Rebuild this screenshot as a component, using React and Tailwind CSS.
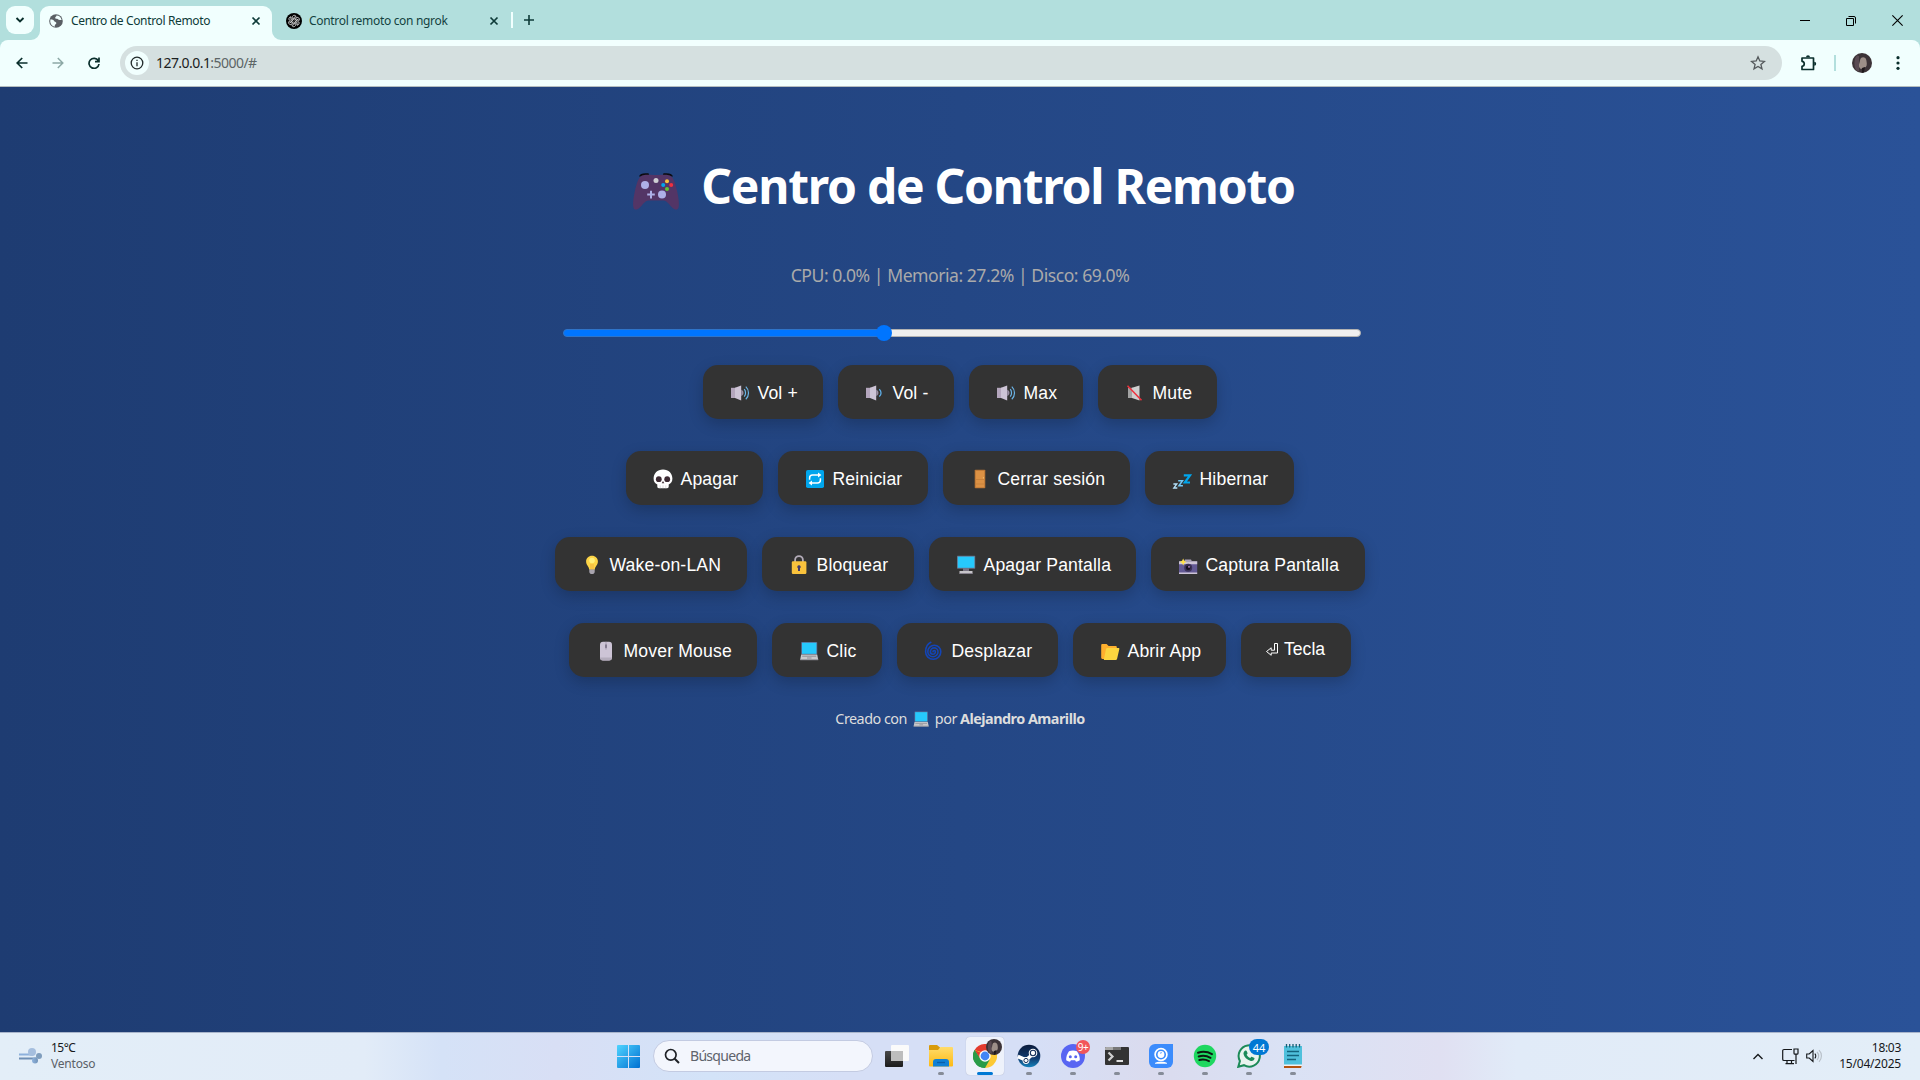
import React from "react";

const UI = "font-['Noto_Sans','Open_Sans',sans-serif]";

/* ---------- Emoji style icons, drawn on a 24x24 grid ---------- */

const Icon = ({ children, className = "w-6 h-6" }) => (
  <svg viewBox="0 0 24 24" className={`${className} shrink-0`} aria-hidden="true">{children}</svg>
);

const SpeakerBody = () => (
  <>
    <path d="M3 6.800h5V17H3z" fill="#b4a6bd" />
    <path d="M7 6.800 13.200 4.400v15L7 17z" fill="#cdc4d6" />
    <path d="M13.200 8.800c3 .6 3 5.600 0 6.200z" fill="#998ea4" />
  </>
);
const SpeakerLoud = () => (
  <Icon>
    <SpeakerBody />
    <path d="M16.200 8.200c1.800 2 1.800 5.400 0 7.400M17.800 5.600c3.600 3.400 3.600 9.200 0 12.600" fill="none" stroke="#6cb5e8" strokeWidth="1.200" />
  </Icon>
);
const SpeakerLow = () => (
  <Icon>
    <SpeakerBody />
    <path d="M16.300 8.200c2.300 2 2.300 5.400 0 7.400" fill="none" stroke="#5fb0ea" strokeWidth="1.300" />
  </Icon>
);
const SpeakerMute = () => (
  <Icon>
    <path d="M5 6.800h5V17H5z" fill="#a2a2a2" />
    <path d="M9 6.800 16.500 4.500v15L9 17z" fill="#cfcfcf" />
    <path d="M4.500 4.800 18.500 19.200" stroke="#f0303c" strokeWidth="1.500" />
  </Icon>
);
const Skull = () => (
  <Icon>
    <path d="M12 2.500c5.700 0 9.400 3.900 9.400 9 0 3.200-1.400 5-3.700 5.900v2.200c0 1-.7 1.700-1.600 1.700H7.900c-.9 0-1.600-.7-1.600-1.700v-2.200c-2.300-.9-3.700-2.700-3.700-5.900 0-5.100 3.700-9 9.400-9z" fill="#fff" />
    <circle cx="7.800" cy="12.200" r="2.900" fill="#3d2a33" />
    <circle cx="16.200" cy="12.200" r="2.900" fill="#3d2a33" />
    <path d="m12 14 1.300 2.300h-2.600z" fill="#3d2a33" />
    <path d="M9.200 18.300v3M12 18.300v3M14.800 18.300v3" stroke="#c9c4c8" strokeWidth=".6" />
  </Icon>
);
const Repeat = () => (
  <Icon>
    <rect x="3" y="3" width="18" height="18" rx="1.800" fill="#00a6ed" />
    <path d="M6.600 12.800V11c0-1.800 1.300-3 3-3h6.600M17.400 11.200V13c0 1.800-1.300 3-3 3H7.800" fill="none" stroke="#fff" strokeWidth="1.500" />
    <path d="m15 5.400 3.400 2.600L15 10.600zM9 13.400 5.600 16 9 18.600z" fill="#fff" />
  </Icon>
);
const Door = () => (
  <Icon>
    <rect x="6.700" y="2.800" width="10.600" height="18.400" rx=".8" fill="#b97434" />
    <rect x="7.700" y="3.800" width="8.600" height="16.600" fill="#dc9144" />
    <path d="M8 12.500h8M8 17h8" stroke="#b97434" strokeWidth=".5" />
    <circle cx="15.400" cy="10.800" r=".6" fill="#ffce7c" />
  </Icon>
);
const Zzz = () => (
  <Icon>
    <path d="M13.800 8.300h6.200L14.800 15.500h5.200" fill="none" stroke="#00a6ed" strokeWidth="2.200" />
    <path d="M8.200 13.700h4.300l-3.600 5h4" fill="none" stroke="#74c8f4" strokeWidth="1.500" />
    <path d="M3.400 17h3.400l-3 4h3.500" fill="none" stroke="#b5e2fb" strokeWidth="1.300" />
  </Icon>
);
const Bulb = () => (
  <Icon>
    <path d="M12 2.800c3.400 0 5.900 2.500 5.900 5.800 0 3.600-2.600 4.500-3.200 8.200H9.300c-.6-3.700-3.200-4.600-3.200-8.200 0-3.300 2.500-5.800 5.900-5.800z" fill="#fdd547" />
    <circle cx="12" cy="7.500" r="2.800" fill="#fff07a" />
    <path d="M11 11v5.500M13 11v5.500" stroke="#e9a33c" strokeWidth=".7" />
    <path d="M9.300 16.600h5.400v2.200c0 1.400-1.200 2.300-2.700 2.300s-2.700-.9-2.700-2.300z" fill="#a8a4ae" />
  </Icon>
);
const Lock = () => (
  <Icon>
    <path d="M8.100 9V7a3.900 3.900 0 0 1 7.800 0v2" fill="none" stroke="#b3acb9" strokeWidth="1.800" />
    <rect x="4.800" y="8.200" width="14.600" height="12.800" rx="1.200" fill="#f9c23c" />
    <path d="M12 12.200a1.700 1.700 0 0 1 1 3.100v2.700h-2v-2.700a1.700 1.700 0 0 1 1-3.100z" fill="#433b6b" />
  </Icon>
);
const Desktop = () => (
  <Icon>
    <path d="M9 15h6v4H9z" fill="#797484" />
    <rect x="3" y="2.800" width="18.200" height="12.900" rx=".6" fill="#6b7188" />
    <rect x="3.800" y="3.600" width="16.600" height="11.200" fill="#26c9fc" />
    <path d="M5.500 18h13v2.800h-13z" fill="#c6c4c9" />
    <path d="M5.500 20h13v.8h-13z" fill="#807b89" />
  </Icon>
);
const Camera = () => (
  <Icon>
    <path d="M3 8.500h18.200v12H3z" fill="#635994" />
    <path d="M3 8.300h18.200v3H3zM3 19.400h18.200V21H3z" fill="#cdc4d6" />
    <path d="M9 6.500h6l1 2H8z" fill="#a9a0b8" />
    <circle cx="12.200" cy="14.800" r="4" fill="#3b3158" />
    <circle cx="12.200" cy="14.800" r="2.300" fill="#16101f" />
    <circle cx="13" cy="13.900" r=".8" fill="#d39ae0" />
    <path d="m7.200 5.600 1.100 2.300 2.300 1.100-2.300 1.100-1.100 2.300L6.100 10 3.800 9l2.300-1.200z" fill="#ffe04a" />
  </Icon>
);
const Mouse = () => (
  <Icon>
    <rect x="6" y="2.700" width="12" height="18.800" rx="3" fill="#cdc4d6" />
    <path d="M6 18.400v.4a3 3 0 0 0 3 2.700h6a3 3 0 0 0 3-2.700v-.4z" fill="#b4acbc" />
    <path d="M12 2.700v8" stroke="#998ea4" strokeWidth=".7" />
    <rect x="11" y="5.200" width="2" height="4" rx="1" fill="#837a8f" />
  </Icon>
);
const Laptop = ({ className }) => (
  <Icon className={className}>
    <rect x="4.200" y="3" width="16" height="12.600" rx=".7" fill="#5c6f95" />
    <rect x="5" y="3.800" width="14.400" height="11" fill="#26c9fc" />
    <path d="M4.200 15.600h16l1 5H3.200z" fill="#c9c9cc" />
    <path d="M5.200 17.200h14M10 19h4.500" stroke="#8f8f96" strokeWidth="1" />
    <path d="M3.200 20h18v1.200h-18z" fill="#9b9ba2" />
  </Icon>
);
const Cyclone = () => (
  <Icon>
    <path d="M11 12.700a1.200 1.200 0 0 1 2.400 0a2.500 2.500 0 0 1-5 0a3.800 3.800 0 0 1 7.600 0a5.100 5.100 0 0 1-10.200 0a6.500 6.500 0 0 1 13 0a7.600 7.600 0 0 1-15.200 0C3.600 8.500 5.300 5 8.800 3.300" fill="none" stroke="#1345b7" strokeWidth="1.600" strokeLinecap="round" />
  </Icon>
);
const Folder = () => (
  <Icon>
    <path d="M3.200 6.200c0-.7.500-1.200 1.200-1.200h4.200l2 2h7c.7 0 1.200.5 1.200 1.200V20H4.400c-.7 0-1.200-.5-1.200-1.200z" fill="#ffb02e" />
    <path d="M8 10c.2-.7.700-1 1.300-1h11.200c.7 0 1 .5.800 1.200l-2.200 9.600c-.2.800-.7 1.200-1.400 1.200H5.800z" fill="#fcd53f" />
  </Icon>
);
const Enter = () => (
  <svg viewBox="0 0 14 16" className="-ml-px h-4 w-3.5 shrink-0" aria-hidden="true">
    <path d="M9.500 2.500h3v9.500H6.200v2.300L1.500 10.500l4.700-3.700v2.400h3.300z" fill="none" stroke="#fff" strokeWidth="1" />
  </svg>
);
const Gamepad = () => (
  <svg viewBox="0 0 48 38" className="w-12 h-[38px] shrink-0" aria-hidden="true">
    <path d="M7 4.500C8 1.500 11 .8 16.500 1.300L17.500 4zM41 4.500C40 1.500 37 .8 31.500 1.300L30.500 4z" fill="#0b0b10" />
    <path d="M10 3.600C12.500 2.300 17 3 24 3s11.500-.7 14 .6c3.700 1.800 5.600 8.500 7.500 17.400 1.600 7.600 1.800 12.500.9 15-.7 1.900-3.200 2.200-5.200.6C37.500 33.500 35 28.600 31.500 28.600h-15C13 28.600 10.500 33.500 6.800 36.600c-2 1.600-4.500 1.300-5.200-.6-.9-2.500-.7-7.400.9-15C4.400 12.100 6.300 5.400 10 3.600z" fill="#533566" />
    <circle cx="13" cy="13" r="4" fill="#aeb0e8" />
    <circle cx="30" cy="22.600" r="4" fill="#aeb0e8" />
    <path d="M19 18.800v7.600M15.200 22.600h7.600" stroke="#aeb0e8" strokeWidth="2" />
    <circle cx="24" cy="8.500" r="2.500" fill="#cfcfd4" />
    <circle cx="35" cy="9.200" r="2" fill="#f9c23c" />
    <circle cx="39.200" cy="13" r="2" fill="#f03040" />
    <circle cx="31.200" cy="13" r="2" fill="#00a6ed" />
    <circle cx="35" cy="16.900" r="2" fill="#62c534" />
  </svg>
);

/* ---------- Browser chrome ---------- */

const CloseX = () => (
  <svg viewBox="0 0 10 10" className="w-2.5 h-2.5" aria-hidden="true">
    <path d="M1.500 1.500l7 7M8.500 1.500l-7 7" stroke="#0e3b38" strokeWidth="1.700" />
  </svg>
);

const TabStrip = () => (
  <div className="flex h-10 items-end bg-[#b2dfdd] pl-1.5">
    <button className="mb-1.5 flex h-7 w-7 items-center justify-center rounded-[9px] bg-[#f1fffe]">
      <svg viewBox="0 0 10 8" className="h-2 w-2.5"><path d="M1.500 2 5 5.500 8.500 2" fill="none" stroke="#0a2f2c" strokeWidth="1.900" /></svg>
    </button>
    <svg viewBox="0 0 9 9" className="-ml-[3px] h-[9px] w-[9px]"><path d="M9 0v9H0a9 9 0 0 0 9-9z" fill="#f1fffe" /></svg>
    <div className="flex h-[34px] w-[232px] items-center rounded-t-[9px] bg-[#f1fffe] pb-[5px] pl-[9px] pr-[11px]">
      <svg viewBox="0 0 14 14" className="h-3.5 w-3.5">
        <circle cx="7" cy="7" r="6.800" fill="#5a5f64" />
        <path d="M1.600 5.200c1.500.2 3.200.6 3.400 1.600.3 1.200 2 .9 2.300 2 .2 1-.6 1.500-1.200 2-.5.500-.2 1.300-.4 1.900C3 12 1.200 9.800 1.200 7zM7.400 1.500c.2 1-.9 1.300-1.200 2-.2.900.8 1.400 1.700 1.200 1-.2 1 .8 1.900 1 1 .2 1.500.3 2.800.2-.4-2.400-2.400-4.500-5.200-4.400z" fill="#f1fffe" />
      </svg>
      <span className={`${UI} ml-2 whitespace-nowrap text-[12px] leading-4 tracking-[-0.350px] text-[#0e3b38]`}>Centro de Control Remoto</span>
      <span className="ml-auto"><CloseX /></span>
    </div>
    <svg viewBox="0 0 9 9" className="h-[9px] w-[9px]"><path d="M0 0v9h9a9 9 0 0 1-9-9z" fill="#f1fffe" /></svg>
    <div className="flex h-[34px] w-[218px] items-center pb-[5px] pl-[5px]">
      <svg viewBox="0 0 16 16" className="h-4 w-4">
        <circle cx="8" cy="8" r="8" fill="#000" />
        <g fill="none" stroke="#e8e8e8" strokeWidth=".8">
          {[0, 60, 120, 180, 240, 300].map((a) => (
            <path key={a} d="M6.300 7V4.300c0-1.200.9-2 2-2 .8 0 1.500.4 1.800 1L7.600 4.800v2.300" transform={`rotate(${a} 8 8)`} />
          ))}
        </g>
      </svg>
      <span className={`${UI} ml-[7px] whitespace-nowrap text-[12px] leading-4 tracking-[-0.320px] text-[#14423f]`}>Control remoto con ngrok</span>
      <span className="ml-auto"><CloseX /></span>
    </div>
    <div className="mb-3 ml-3 h-4 w-0.5 bg-[#f1fffe]" />
    <svg viewBox="0 0 10 10" className="mb-[15px] ml-[11px] h-2.5 w-2.5"><path d="M5 0v10M0 5h10" stroke="#0e3b38" strokeWidth="1.600" /></svg>
    <div className="mb-[14px] ml-auto mr-[17px] flex items-center gap-9">
      <svg viewBox="0 0 10 10" className="h-2.5 w-2.5"><path d="M0 4.500h10" stroke="#000" /></svg>
      <svg viewBox="0 0 10 10" className="h-2.5 w-2.5"><path d="M.5 2.500h7v7h-7zM2.500.500h5.500a1.500 1.500 0 0 1 1.500 1.500v5.500" fill="none" stroke="#000" /></svg>
      <svg viewBox="0 0 10 10" className="h-[11px] w-[11px]"><path d="M.3.3l9.400 9.400M9.700.3.300 9.700" stroke="#000" /></svg>
    </div>
  </div>
);

const Avatar = ({ className }) => (
  <svg viewBox="0 0 20 20" className={className} aria-hidden="true">
    <circle cx="10" cy="10" r="10" fill="#3c3337" />
    <path d="M5 2.500C2 5 1.500 13 4 17l3 1.500V3z" fill="#594a52" />
    <path d="M9 5c2-1.600 5-.7 5.400 2.500.3 2.200 1 4.500-.5 6.500l-5 2c-2-1-2.500-4-1.500-6 .6-1.200.4-3.500 1.600-5z" fill="#9d8f88" />
    <path d="m10 15 3-1-1 5.500-2 .2z" fill="#1f191c" />
  </svg>
);

const Toolbar = () => (
  <div className="h-[47px] bg-[#b2dfdd]">
    <div className="flex h-[47px] items-center rounded-t-lg border-b border-[#b4bdbf] bg-[#f1fffe] pl-4">
      <svg viewBox="0 0 12 12" className="h-3 w-3"><path d="M11.500 6H1.200M6.200 1 1.200 6l5 5" fill="none" stroke="#0a2f2c" strokeWidth="1.700" /></svg>
      <svg viewBox="0 0 12 12" className="ml-6 h-3 w-3"><path d="M.5 6h10.300M5.800 1l5 5-5 5" fill="none" stroke="#8da9a6" strokeWidth="1.500" /></svg>
      <svg viewBox="0 0 12 12" className="ml-6 h-3 w-3"><path d="M10.300 3.700A5 5 0 1 0 11 7M11 .6v4H7" fill="none" stroke="#0a2f2c" strokeWidth="1.700" /></svg>
      <div className="ml-5 flex h-[34px] w-[1662px] items-center rounded-full bg-[#d5e0e0] pl-[5px] pr-4">
        <span className="flex h-6 w-6 items-center justify-center rounded-full bg-[#f1fffe]">
          <svg viewBox="0 0 14 14" className="h-3.5 w-3.5"><circle cx="7" cy="7" r="5.800" fill="none" stroke="#222b2b" strokeWidth="1.300" /><path d="M7 6.200v4M7 3.700v1.400" stroke="#222b2b" strokeWidth="1.300" /></svg>
        </span>
        <span className={`${UI} ml-[7px] text-[14px] leading-5 tracking-[-0.550px] text-[#5c6566]`}><span className="text-[#1b2122]">127.0.0.1</span>:5000/#</span>
        <svg viewBox="0 0 16 16" className="ml-auto h-4 w-4"><path d="m8 1.800 1.800 4.200 4.600.4-3.500 3 1.100 4.500L8 11.500l-4 2.400 1.100-4.500-3.500-3 4.600-.4z" fill="none" stroke="#54595c" strokeWidth="1.300" /></svg>
      </div>
      <svg viewBox="0 0 17 17" className="ml-[18px] h-[17px] w-[17px]"><path d="M2 3h11.500v11.500H2v-3.200c3-.2 3-4.800 0-5z" fill="none" stroke="#0a2f2c" strokeWidth="1.700" strokeLinejoin="round" /><path d="M6 2.300a2 2 0 0 1 4 0zM14.200 6.700a2 2 0 0 1 0 4z" fill="#0a2f2c" /></svg>
      <span className="ml-[17px] h-4 w-0.5 bg-[#b2dfdd]" />
      <Avatar className="ml-4 h-5 w-5" />
      <svg viewBox="0 0 4 14" className="ml-6 h-3.5 w-1"><circle cx="2" cy="1.700" r="1.600" fill="#0a2f2c" /><circle cx="2" cy="7" r="1.600" fill="#0a2f2c" /><circle cx="2" cy="12.300" r="1.600" fill="#0a2f2c" /></svg>
    </div>
  </div>
);

/* ---------- Page ---------- */

const ROWS = [
  [
    { label: "Vol +", icon: <SpeakerLoud />, w: "w-[120px]" },
    { label: "Vol -", icon: <SpeakerLow />, w: "w-[116px]" },
    { label: "Max", icon: <SpeakerLoud />, w: "w-[114px]" },
    { label: "Mute", icon: <SpeakerMute />, w: "w-[119px]" },
  ],
  [
    { label: "Apagar", icon: <Skull />, w: "w-[137px]" },
    { label: "Reiniciar", icon: <Repeat />, w: "w-[150px]" },
    { label: "Cerrar sesión", icon: <Door />, w: "w-[187px]" },
    { label: "Hibernar", icon: <Zzz />, w: "w-[149px]" },
  ],
  [
    { label: "Wake-on-LAN", icon: <Bulb />, w: "w-[192px]" },
    { label: "Bloquear", icon: <Lock />, w: "w-[152px]" },
    { label: "Apagar Pantalla", icon: <Desktop />, w: "w-[207px]" },
    { label: "Captura Pantalla", icon: <Camera />, w: "w-[214px]" },
  ],
  [
    { label: "Mover Mouse", icon: <Mouse />, w: "w-[188px]" },
    { label: "Clic", icon: <Laptop />, w: "w-[110px]" },
    { label: "Desplazar", icon: <Cyclone />, w: "w-[161px]" },
    { label: "Abrir App", icon: <Folder />, w: "w-[153px]" },
    { label: "Tecla", icon: <Enter />, w: "w-[110px]", small: true },
  ],
];

const ControlButton = ({ label, icon, w, small }) => (
  <button
    className={`flex h-[54px] items-center whitespace-nowrap rounded-[15px] bg-[#333333] pl-[25px] font-['Liberation_Sans',Arial,sans-serif] text-[17.600px] leading-5 text-white shadow-[0_5px_15px_rgba(0,0,0,0.200)] ${w} ${small ? "gap-[5px] pb-0.5" : "gap-[5.500px] pt-0.5 tracking-[0.160px]"}`}
  >
    {icon}
    <span>{label}</span>
  </button>
);

const Page = () => (
  <main className={`${UI} flex h-[945px] flex-col items-center bg-[linear-gradient(to_right,#1e3c72,#2a5298)]`}>
    <h1 className="ml-[7px] mt-[67px] flex h-16 items-center gap-[21px] text-[48px] font-bold leading-[64px] text-white">
      <span className="mt-[9px]"><Gamepad /></span>
      <span className="whitespace-nowrap tracking-[-1.270px]">Centro de Control Remoto</span>
    </h1>
    <p className="mt-[45px] h-6 whitespace-nowrap text-[17.600px] leading-6 tracking-[-0.480px] text-[#aaaaaa]">CPU: 0.0% | Memoria: 27.2% | Disco: 69.0%</p>
    <div className="mt-[38px] ml-[3px] flex h-4 w-[798px] items-center">
      <div className="h-2 w-[321px] rounded-l-full border border-[#2f74c9] bg-[#0075ff]" />
      <div className="z-10 -mx-2 h-4 w-4 shrink-0 rounded-full bg-[#0075ff]" />
      <div className="h-2 flex-1 rounded-r-full border border-[#b2b2b2] bg-[#efefef]" />
    </div>
    <div className="mt-6 flex flex-col items-center gap-8">
      {ROWS.map((row, i) => (
        <div key={i} className="flex gap-[15px]">
          {row.map((b) => <ControlButton key={b.label} {...b} />)}
        </div>
      ))}
    </div>
    <footer className="mt-8 flex h-5 items-center whitespace-nowrap text-[14.400px] leading-5 tracking-[-0.520px] text-[#dddddd]">
      <span>Creado con</span>
      <Laptop className="mx-1 h-5 w-5" />
      <span>por <strong className="font-bold">Alejandro Amarillo</strong></span>
    </footer>
  </main>
);

/* ---------- Taskbar ---------- */

const Slot = ({ children, running = true, active }) => (
  <div className="flex w-11 justify-center">
    <div className={`relative flex h-[38px] w-[38px] items-center justify-center rounded ${active ? "bg-[#eef2fb] shadow-[0_0_1px_rgba(0,0,0,0.250)]" : ""}`}>
      {children}
      {running && <span className={`absolute bottom-0 rounded-full ${active ? "h-[3px] w-4 bg-[#0078d4]" : "h-[3px] w-1.5 bg-[#868c98]"}`} />}
    </div>
  </div>
);

const TaskIcon = ({ children }) => <svg viewBox="0 0 24 24" className="h-6 w-6" aria-hidden="true">{children}</svg>;

const Taskbar = () => (
  <div className={`${UI} flex h-12 items-center border-t border-[#a9b5cb] bg-[linear-gradient(to_right,#e3eef8_0%,#e2ecf8_19%,#d5e2f7_23%,#d8dff5_29%,#d3e3f8_37%,#d6dff6_44%,#d6dff6_54%,#dadbee_60%,#dae2f5_67%,#e0e0f2_75%,#e1ebf8_79%,#e3eef8_100%)] pb-px`}>
    <div className="flex w-[617px] items-center pl-[18px]">
      <svg viewBox="0 0 24 18" className="h-[18px] w-6">
        <defs><linearGradient id="wind" x1="0" x2="1"><stop offset="0" stopColor="#8fb3de" /><stop offset="1" stopColor="#7193b8" /></linearGradient></defs>
        <path d="M1 7.500h14" stroke="#8cb0dc" strokeWidth="2" />
        <path d="M1 11.500h18" stroke="#6e8fb5" strokeWidth="2" />
        <circle cx="14" cy="5" r="4" fill="#a5bede" />
        <circle cx="21" cy="9" r="3" fill="#7f9dbd" />
        <circle cx="17" cy="13.500" r="3" fill="url(#wind)" />
      </svg>
      <div className="ml-[9px] text-[12px] leading-4">
        <div className="tracking-[-0.550px] text-[#16191c]">15°C</div>
        <div className="tracking-[-0.200px] text-[#5b6168]">Ventoso</div>
      </div>
    </div>
    <svg viewBox="0 0 23 23" className="h-[23px] w-[23px]">
      <defs><linearGradient id="win" x1="0" y1="0" x2="1" y2="1"><stop offset="0" stopColor="#4fd4ff" /><stop offset="1" stopColor="#006fd1" /></linearGradient></defs>
      <path d="M1 0h10v11H0V1a1 1 0 0 1 1-1zM12 0h10a1 1 0 0 1 1 1v10H12zM0 12h11v11H1a1 1 0 0 1-1-1zM12 12h11v10a1 1 0 0 1-1 1H12z" fill="url(#win)" />
    </svg>
    <div className="ml-[13px] flex h-8 w-[220px] items-center rounded-full border border-[#c3cbe2] bg-[#f3f6fd] pl-[10px]">
      <svg viewBox="0 0 16 16" className="h-4 w-4"><circle cx="6.800" cy="6.800" r="5.300" fill="none" stroke="#1f2227" strokeWidth="1.700" /><path d="m10.700 10.700 4.300 4.300" stroke="#1f2227" strokeWidth="2" /></svg>
      <span className="ml-[10px] text-[14px] leading-5 tracking-[-0.700px] text-[#5f636c]">Búsqueda</span>
    </div>
    <div className="ml-[2px] flex">
      <Slot running={false}>
        <TaskIcon>
          <defs><linearGradient id="tv" x1="0" y1="0" x2="0" y2="1"><stop offset="0" stopColor="#484848" /><stop offset="1" stopColor="#1c1c1c" /></linearGradient></defs>
          <rect x="0" y="7" width="18" height="16" rx="1" fill="url(#tv)" />
          <rect x="6" y="1" width="18" height="16" rx="1" fill="#fafafa" />
          <path d="M6 7h12v10H7a1 1 0 0 1-1-1z" fill="#bdbdbd" />
        </TaskIcon>
      </Slot>
      <Slot>
        <TaskIcon>
          <defs><linearGradient id="fo" x1="0" y1="0" x2="0" y2="1"><stop offset="0" stopColor="#ffdc6b" /><stop offset="1" stopColor="#fdb913" /></linearGradient></defs>
          <path d="M0 2a1 1 0 0 1 1-1h7l3 2.500V8H0z" fill="#d99b0b" />
          <path d="M0 6h9l2.500-3H23a1 1 0 0 1 1 1v17.500a1 1 0 0 1-1 1H1a1 1 0 0 1-1-1z" fill="url(#fo)" />
          <path d="M4 22.500V18a3 3 0 0 1 3-3h10a3 3 0 0 1 3 3v4.500z" fill="#1080d4" />
          <path d="M8 18.500h8" stroke="#0b5ea8" strokeWidth="1.300" />
        </TaskIcon>
      </Slot>
      <Slot active>
        <TaskIcon>
          <path d="M12 12 1.600 6A12 12 0 0 1 22.400 6z" fill="#e33b2e" />
          <path d="M12 12 22.400 6A12 12 0 0 1 12 24z" fill="#fcc934" />
          <path d="M12 12V24A12 12 0 0 1 1.600 6z" fill="#2a9c48" />
          <path d="M12 6.500h10.700l-5.500 8.500zM7.200 14.700 1.600 6l6.500 2zM16.800 14.700 12 24l-1-7z" fill="#fcc934" />
          <path d="M1.600 6 7.300 15l1-6zM12 6.500h10.600L22.400 6H9z" fill="#e33b2e" />
          <path d="M1.600 6A12 12 0 0 0 12 24l4.800-8.500-9.600-.8z" fill="#2a9c48" />
          <circle cx="12" cy="12" r="5.700" fill="#fff" />
          <circle cx="12" cy="12" r="4.400" fill="#4285f4" />
        </TaskIcon>
        <Avatar className="absolute right-0.5 top-0.5 h-4 w-4" />
      </Slot>
      <Slot>
        <TaskIcon>
          <defs><linearGradient id="st" x1="0" y1="0" x2="0" y2="1"><stop offset="0" stopColor="#0b1b3b" /><stop offset=".6" stopColor="#123c70" /><stop offset="1" stopColor="#1584bd" /></linearGradient></defs>
          <circle cx="12" cy="12" r="11.300" fill="url(#st)" />
          <path d="M.8 12.500 9 16l7-6" fill="none" stroke="#fff" strokeWidth="3.600" />
          <circle cx="16" cy="9" r="4.300" fill="#fff" /><circle cx="16" cy="9" r="2.700" fill="none" stroke="#16305a" strokeWidth="1.100" />
          <circle cx="9" cy="16.500" r="3.400" fill="#fff" /><circle cx="9" cy="16.500" r="2.100" fill="none" stroke="#16305a" />
        </TaskIcon>
      </Slot>
      <Slot>
        <TaskIcon>
          <circle cx="12" cy="12" r="12" fill="#5865f2" />
          <path d="M8 7.200c2.500-.9 5.500-.9 8 0 2 2.800 3 5.800 2.800 9-1.200.9-2.500 1.400-3.800 1.600l-.9-1.500h-4.200L9 17.800c-1.300-.2-2.600-.7-3.800-1.600-.2-3.200.8-6.200 2.800-9z" fill="#fff" />
          <circle cx="9.300" cy="12.800" r="1.500" fill="#5865f2" /><circle cx="14.700" cy="12.800" r="1.500" fill="#5865f2" />
        </TaskIcon>
        <span className="absolute right-[2px] top-[3px] flex h-3.5 w-3.5 items-center justify-center rounded-full bg-[#f2555a] text-[10px] leading-none tracking-[-0.500px] text-white">9+</span>
      </Slot>
      <Slot>
        <TaskIcon>
          <rect x="0" y="3" width="24" height="18" rx="1" fill="#333" />
          <path d="M1 3h15v3H0V4a1 1 0 0 1 1-1z" fill="#a9a9a9" /><path d="M8 3h8v3H8z" fill="#777" />
          <path d="m3.500 8.500 4 4-4 4" fill="none" stroke="#d0d0d0" strokeWidth="2.200" />
          <path d="M11.500 17h6.500" stroke="#fff" strokeWidth="1.700" />
        </TaskIcon>
      </Slot>
      <Slot>
        <TaskIcon>
          <path d="M6 0h18v18a6 6 0 0 1-6 6H6a6 6 0 0 1-6-6V6a6 6 0 0 1 6-6z" fill="#3c8cfc" />
          <circle cx="12" cy="10.500" r="5.900" fill="none" stroke="#fff" strokeWidth="1.700" />
          <circle cx="12" cy="10.500" r="3.400" fill="#fff" />
          <path d="M11 9.500a2 2 0 0 1 1.800-.8" fill="none" stroke="#3c8cfc" strokeWidth=".9" />
          <path d="M6 19c1.500-1.600 10.500-1.600 12 0v.7H6z" fill="#fff" />
        </TaskIcon>
      </Slot>
      <Slot>
        <TaskIcon>
          <circle cx="12" cy="12" r="11.200" fill="#1ed760" />
          <path d="M5 8.700c4.700-1.400 9.800-.9 14 1.400M5.700 12.500c4-1.200 8.300-.7 11.800 1.300M6.300 16c3.300-.9 6.700-.5 9.700 1.100" fill="none" stroke="#0c1a11" strokeWidth="2" strokeLinecap="round" />
        </TaskIcon>
      </Slot>
      <Slot>
        <TaskIcon>
          <path d="M1.300 22.800 2.900 17A10.600 10.600 0 1 1 7 21.200z" fill="#e9f3ee" stroke="#1c8a58" strokeWidth="2" />
          <path d="M8.400 6.500c.8-.3 1.100 0 1.400.7l.7 1.700c.2.600-.2 1-.9 1.800.9 1.600 2.100 2.600 3.700 3.300.8-1 1.200-1.400 1.800-1.100l1.900.9c.6.300.6.600.4 1.300-.5 1.500-2 2.100-3.600 1.800-4-.9-6.600-3.900-7.300-6.900-.2-1.500.7-3 1.900-3.500z" fill="#1c8a58" />
        </TaskIcon>
        <span className="absolute -right-[1px] top-0.5 flex h-4 w-5 items-center justify-center rounded-full bg-[#0078d4] text-[11px] leading-none text-white">44</span>
      </Slot>
      <Slot>
        <TaskIcon>
          <path d="M3 2h18v20H3z" fill="#4fc0dc" />
          <path d="M3 21h18l-1 3H3z" fill="#b5530f" /><path d="M3 20.500h18v1.500H3z" fill="#f2f2f2" />
          <path d="M5.500 0v3.500M8.700 0v3.500M12 0v3.500M15.200 0v3.500M18.500 0v3.500" stroke="#155e73" strokeWidth="1.300" />
          <path d="M6 7.500h12M6 11.500h12M6 15.500h9" stroke="#13647e" strokeWidth="1.500" />
        </TaskIcon>
      </Slot>
    </div>
    <div className="ml-auto flex items-center pr-[19px] text-[#15181b]">
      <svg viewBox="0 0 10 7" className="h-[7px] w-2.5"><path d="M.5 6 5 1.500 9.500 6" fill="none" stroke="currentColor" strokeWidth="1.400" /></svg>
      <svg viewBox="0 0 17 17" className="ml-[19px] h-[17px] w-[17px]"><path d="M10 1.500H2A1.300 1.300 0 0 0 .7 2.800v8.400A1.300 1.300 0 0 0 2 12.500h10.500M5 12.500V15.500M9.500 12.500v3M3.500 15.700h8.500M12 1h4v4.200a1 1 0 0 1-1 1h-2a1 1 0 0 1-1-1zM14 6v10" fill="none" stroke="currentColor" strokeWidth="1.200" /></svg>
      <svg viewBox="0 0 16 14" className="ml-[7px] h-3.5 w-4"><path d="M.7 5h2.500L7 1.500v11L3.200 9H.7z" fill="none" stroke="currentColor" strokeWidth="1.100" /><path d="M8.800 4.700c1.300 1.300 1.300 3.300 0 4.600" fill="none" stroke="currentColor" strokeWidth="1.100" /><path d="M11 3c2.200 2.200 2.200 5.800 0 8M13 1.200c3.200 3 3.200 8.600 0 11.600" fill="none" stroke="#b6bec6" strokeWidth="1.100" /></svg>
      <div className="ml-[17px] text-right text-[12px] leading-4">
        <div className="tracking-[-0.300px]">18:03</div>
        <div className="tracking-[-0.200px]">15/04/2025</div>
      </div>
    </div>
  </div>
);

export default function App() {
  return (
    <div className="flex h-[1080px] w-[1920px] flex-col overflow-hidden">
      <TabStrip />
      <Toolbar />
      <Page />
      <Taskbar />
    </div>
  );
}
